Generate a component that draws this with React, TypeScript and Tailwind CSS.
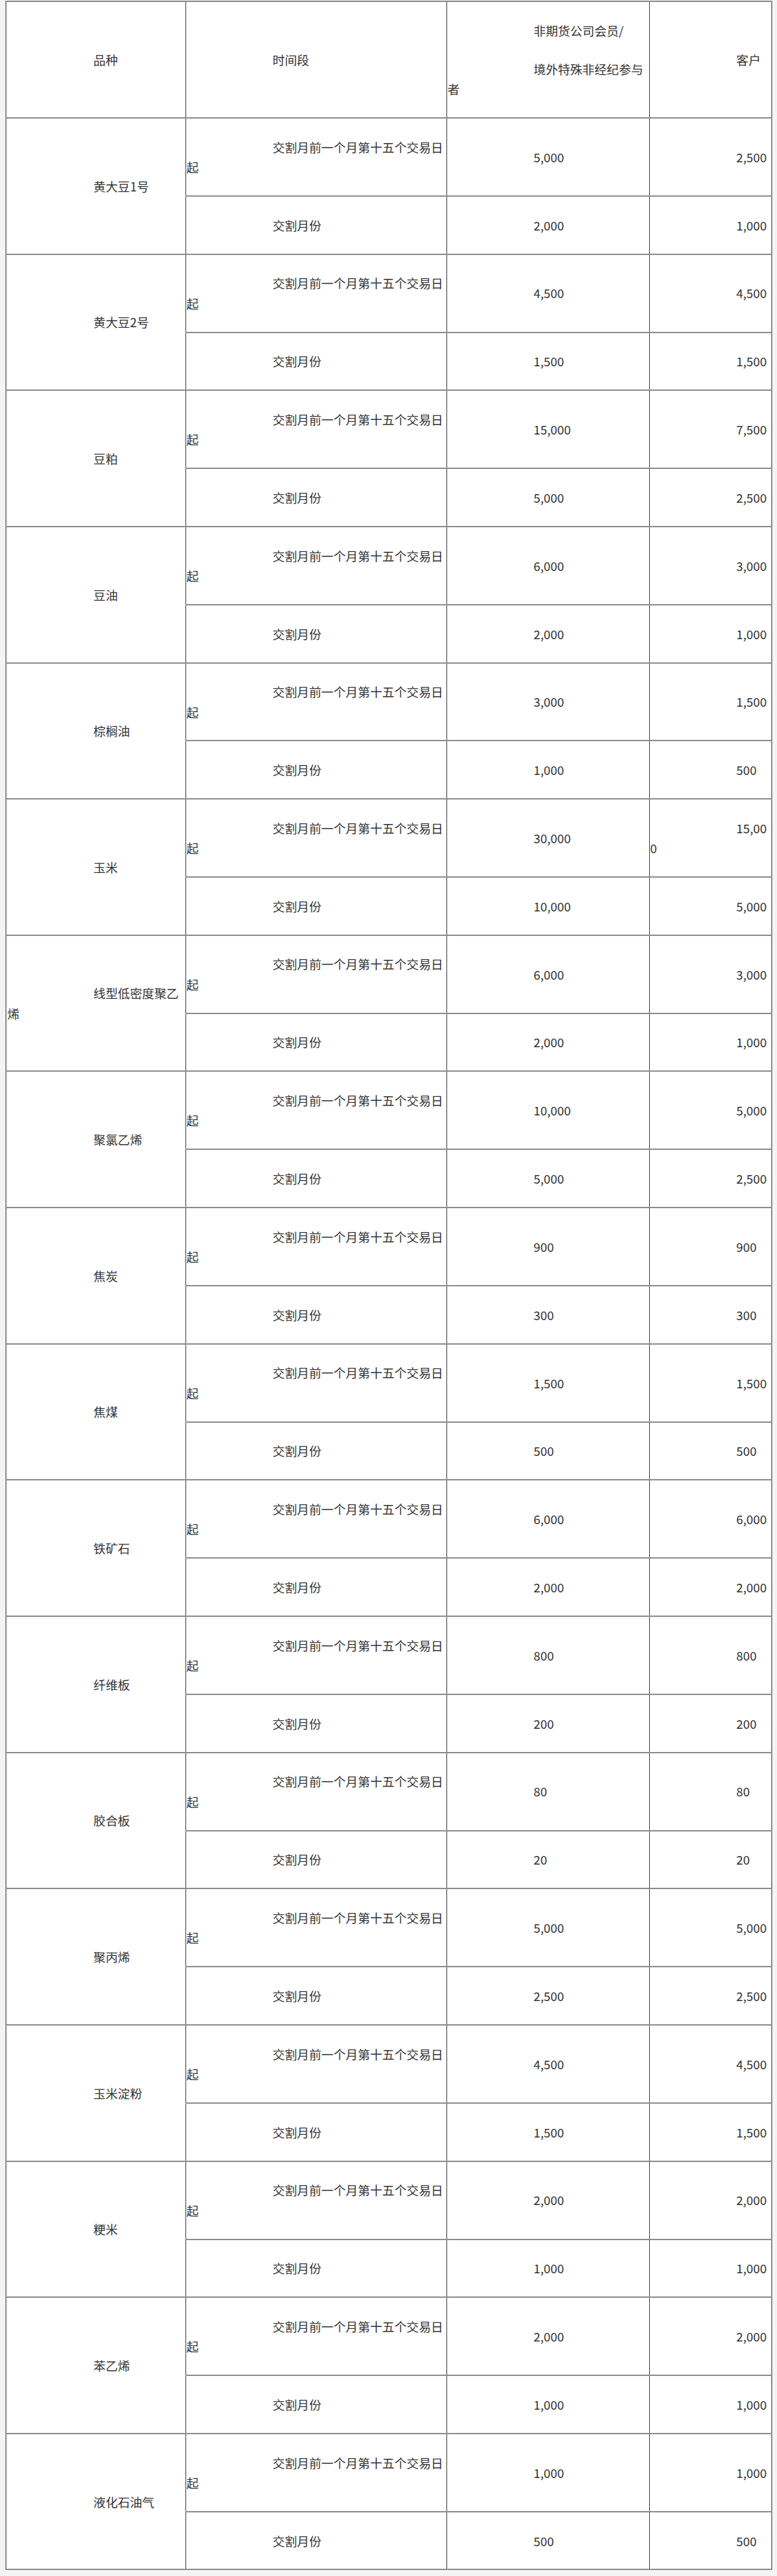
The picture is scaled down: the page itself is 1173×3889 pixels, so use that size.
const rows: { name: string; early: [string, string]; month: [string, string] }[] = [
  { name: "黄大豆1号", early: ["5,000", "2,500"], month: ["2,000", "1,000"] },
  { name: "黄大豆2号", early: ["4,500", "4,500"], month: ["1,500", "1,500"] },
  { name: "豆粕", early: ["15,000", "7,500"], month: ["5,000", "2,500"] },
  { name: "豆油", early: ["6,000", "3,000"], month: ["2,000", "1,000"] },
  { name: "棕榈油", early: ["3,000", "1,500"], month: ["1,000", "500"] },
  { name: "玉米", early: ["30,000", "15,000"], month: ["10,000", "5,000"] },
  { name: "线型低密度聚乙烯", early: ["6,000", "3,000"], month: ["2,000", "1,000"] },
  { name: "聚氯乙烯", early: ["10,000", "5,000"], month: ["5,000", "2,500"] },
  { name: "焦炭", early: ["900", "900"], month: ["300", "300"] },
  { name: "焦煤", early: ["1,500", "1,500"], month: ["500", "500"] },
  { name: "铁矿石", early: ["6,000", "6,000"], month: ["2,000", "2,000"] },
  { name: "纤维板", early: ["800", "800"], month: ["200", "200"] },
  { name: "胶合板", early: ["80", "80"], month: ["20", "20"] },
  { name: "聚丙烯", early: ["5,000", "5,000"], month: ["2,500", "2,500"] },
  { name: "玉米淀粉", early: ["4,500", "4,500"], month: ["1,500", "1,500"] },
  { name: "粳米", early: ["2,000", "2,000"], month: ["1,000", "1,000"] },
  { name: "苯乙烯", early: ["2,000", "2,000"], month: ["1,000", "1,000"] },
  { name: "液化石油气", early: ["1,000", "1,000"], month: ["500", "500"] },
];

const cell =
  "border-x border-x-[#3a3a3a] border-y-2 border-y-[#8c8c8c] px-px py-[27.7px] align-middle indent-[130px] break-words";
const first = `${cell} border-l-2 border-l-[#8c8c8c]`;
const last = `${cell} border-r-2 border-r-[#8c8c8c]`;

export default function App() {
  return (
    <div
      className="min-h-screen bg-[#f4f4f4] pt-px pl-[8px] text-[18.4px] leading-[30.3px] text-[#333]"
      style={{ fontFamily: '"Noto Sans CJK SC", "Noto Sans", sans-serif' }}
    >
      <table className="table-fixed border-collapse bg-white w-[1156px]">
        <colgroup>
          <col className="w-[271px]" />
          <col className="w-[394px]" />
          <col className="w-[306px]" />
          <col className="w-[185px]" />
        </colgroup>
        <tbody>
          <tr>
            <td className={first}>品种</td>
            <td className={cell}>时间段</td>
            <td className={cell}>
              <p>非期货公司会员/</p>
              <p className="mt-[27.7px]">境外特殊非经纪参与者</p>
            </td>
            <td className={last}>客户</td>
          </tr>
          {rows.map((r) => (
            <Block key={r.name} {...r} />
          ))}
        </tbody>
      </table>
    </div>
  );
}

function Block({ name, early, month }: { name: string; early: [string, string]; month: [string, string] }) {
  return (
    <>
      <tr>
        <td rowSpan={2} className={first}>{name}</td>
        <td className={cell}>交割月前一个月第十五个交易日起</td>
        <td className={cell}>{early[0]}</td>
        <td className={last}>{early[1]}</td>
      </tr>
      <tr>
        <td className={cell}>交割月份</td>
        <td className={cell}>{month[0]}</td>
        <td className={last}>{month[1]}</td>
      </tr>
    </>
  );
}
